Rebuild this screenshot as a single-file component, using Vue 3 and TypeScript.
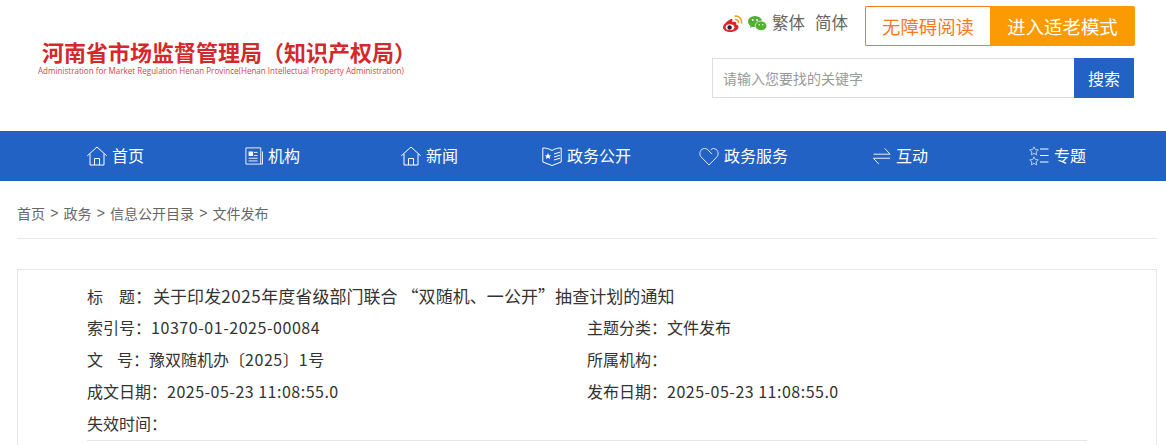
<script setup lang="ts">
const nav = [
  { t: '首页', k: 'home' },
  { t: '机构', k: 'org' },
  { t: '新闻', k: 'home' },
  { t: '政务公开', k: 'book' },
  { t: '政务服务', k: 'heart' },
  { t: '互动', k: 'swap' },
  { t: '专题', k: 'star' },
]
const crumbs = ['首页', '政务', '信息公开目录', '文件发布']
</script>

<template>
  <div class="page">
    <header class="top">
      <div class="logo">
        <div class="logo-cn">河南省市场监督管理局（知识产权局）</div>
        <div class="logo-en">Administration for Market Regulation Henan Province(Henan Intellectual Property Administration)</div>
      </div>
      <div class="tools">
        <div class="tool-row">
          <svg class="ico-weibo" width="20" height="17" viewBox="0 0 20 17">
            <path d="M9 3.800C5 5 0 9.500 0 12.500 0 15.200 3.500 17 7.500 17s8-2.300 8-5c0-1.500-1.200-2.200-2.400-2.500.6-1.700.1-3.200-2.400-2.700-.8.2-1.500.4-1.500.3.300-1.500.3-3.800-.2-3.300z" fill="#d8282c"/>
            <ellipse cx="7" cy="12.300" rx="4.300" ry="3" fill="#fff"/>
            <circle cx="6.600" cy="12.500" r="2.200" fill="#222"/>
            <path d="M11.500 1.200c4-.8 8 2.500 7 7.300M12 4.500c2-.3 3.800 1.200 3.300 3.500" fill="none" stroke="#f39a1e" stroke-width="1.500"/>
          </svg>
          <svg class="ico-wx" width="19" height="15" viewBox="0 0 19 15">
            <ellipse cx="7" cy="5.500" rx="7" ry="5.500" fill="#4fb12f"/>
            <path d="M3 9l-1 3 3.500-2z" fill="#4fb12f"/>
            <ellipse cx="13" cy="9.800" rx="5.800" ry="4.800" fill="#4fb12f" stroke="#fff" stroke-width=".7"/>
            <circle cx="4.800" cy="4" r=".9" fill="#fff"/><circle cx="9" cy="4" r=".9" fill="#fff"/>
            <circle cx="11.200" cy="8.800" r=".7" fill="#fff"/><circle cx="14.800" cy="8.800" r=".7" fill="#fff"/>
          </svg>
          <span class="lang">繁体</span>
          <span class="lang">简体</span>
          <div class="btns">
            <span class="btn-a">无障碍阅读</span>
            <span class="btn-b">进入适老模式</span>
          </div>
        </div>
        <div class="search">
          <div class="input">请输入您要找的关键字</div>
          <div class="go">搜索</div>
        </div>
      </div>
    </header>

    <nav class="nav">
      <a v-for="n in nav" :key="n.t" class="nav-item">
        <svg :class="['nav-ico', 'i-' + n.k]" viewBox="0 0 20 20" fill="none" stroke="#fff" stroke-width="1">
          <template v-if="n.k === 'home'">
            <path d="M.3 9.800 10 1l9.700 8.800M3 7.800V19h14V7.800M7.500 19v-6.500h5V19"/>
          </template>
          <template v-else-if="n.k === 'org'">
            <path d="M1 1h16.500v18H1zM19.500 5v14h-2M4 15.500h10M4 12.500h10M10 9.500h4M10 6h4"/>
            <rect x="4" y="5" width="5" height="5" fill="#fff" stroke="none"/>
          </template>
          <template v-else-if="n.k === 'book'">
            <path d="M.8 2c3.500 0 6.500.8 9.200 2.500C12.700 2.800 15.700 2 19.200 2v14L10 19.500.8 16z"/>
            <path d="M12 8l6-1.800M12 11l6-1.800M12 14l6-1.800" />
            <path d="m6 7 1 2.200 2.200.2-1.700 1.400.6 2.200-2.100-1.200-2.100 1.200.6-2.200-1.700-1.400 2.200-.2z" fill="#fff" stroke="none"/>
          </template>
          <template v-else-if="n.k === 'heart'">
            <path d="M10 19 2 10.800C-.5 7.500 1.500 2.500 5.500 2.500c2 0 3.500 1 4.500 2.500l3 3.200M11.800 3.800c.8-.8 1.800-1.300 2.700-1.300 4 0 6 5 3.500 8.300L10 19" stroke="#dfe8f7"/>
          </template>
          <template v-else-if="n.k === 'swap'">
            <path d="M.5 8h18.500M13 1.500 19 8M.5 12.500H19M.5 12.500l6 6.500"/>
          </template>
          <template v-else>
            <path d="m5 .8 1.300 2.700 3 .4-2.200 2 .6 3L5 7.400 2.300 8.900l.6-3-2.200-2 3-.4zM5 10.800l1.300 2.700 3 .4-2.200 2 .6 3L5 17.400l-2.700 1.500.6-3-2.200-2 3-.4z" stroke="#b8cdec"/>
            <path d="M11 3h8.500M11 9.500h8.500M11 16h8.500"/>
          </template>
        </svg>
        <span class="nav-t">{{ n.t }}</span>
      </a>
    </nav>

    <main class="main">
      <div class="crumbs">
        <template v-for="(c, i) in crumbs" :key="c">
          <span v-if="i" class="sep">&gt;</span>
          <span>{{ c }}</span>
        </template>
      </div>
      <section class="box">
        <div class="row title"><span class="lbl"><span>标</span><span>题</span></span>：<span class="title-text">关于印发<span class="num">2025</span>年度省级部门联合 “双随机、一公开”抽查计划的通知</span></div>
        <div class="grid">
          <div class="row">索引号：<span class="num">10370-01-2025-00084</span></div>
          <div class="row">主题分类：文件发布</div>
          <div class="row"><span class="lbl lbl-s"><span>文</span><span>号</span></span>：豫双随机办〔<span class="num">2025</span>〕<span class="num">1</span>号</div>
          <div class="row">所属机构：</div>
          <div class="row">成文日期：<span class="num date">2025-05-23 11:08:55.0</span></div>
          <div class="row">发布日期：<span class="num date">2025-05-23 11:08:55.0</span></div>
          <div class="row">失效时间：</div>
        </div>
      </section>
    </main>
  </div>
</template>

<style>
html, body { margin: 0; background: #fff; overflow: hidden; }
</style>

<style scoped>
.page { width: 1166px; height: 445px; overflow: hidden; font-family: "Noto Sans CJK SC", "Liberation Sans", sans-serif; color: #333; }
.top { height: 131px; display: flex; justify-content: space-between; box-sizing: border-box; padding: 6px 30px 0 38px; }
.logo { padding-top: 30px; width: 370px; }
.logo-cn { font-size: 22px; line-height: 30px; font-weight: 700; color: #d4282d; margin-left: 4px; white-space: nowrap; }
.logo-en { font-family: "Open Sans", sans-serif; font-size: 8.050px; line-height: 10px; color: #d4454a; white-space: nowrap; }
.tools { width: 424px; }
.tool-row { display: flex; align-items: center; height: 40px; padding-left: 10px; }
.ico-weibo { margin-right: 5px; margin-top: -5px; margin-left: 1px; }
.ico-wx { margin-right: 5px; margin-top: -5px; }
.lang { font-size: 16.500px; color: #666; margin-right: 10px; margin-top: -8px; line-height: 24px; }
.btns { display: flex; margin-left: 7px; }
.btn-a { width: 125px; height: 40px; box-sizing: border-box; border: 1px solid #f97a1d; border-right: none; border-radius: 2px 0 0 2px; color: #f97a1d; font-size: 18.400px; line-height: 38px; text-align: center; }
.btn-b { width: 145px; height: 40px; background: #fb9a02; color: #fff; font-size: 18.400px; line-height: 40px; text-align: center; border-radius: 0 2px 2px 0; }
.search { display: flex; margin-top: 12px; width: 422px; }
.input { width: 362px; height: 40px; box-sizing: border-box; border: 1px solid #ddd; border-right: none; font-size: 14px; line-height: 38px; color: #999; padding-left: 10px; }
.go { width: 60px; height: 40px; background: #2262c4; color: #fff; font-size: 16px; line-height: 40px; text-align: center; }
.nav { height: 50px; background: #2262c4; display: flex; padding-left: 37px; }
.nav-item { width: 157px; display: flex; align-items: center; justify-content: center; gap: 5px; color: #fff; font-size: 16px; }
.nav-ico { width: 20px; height: 20px; flex: none; margin-top: -1px; }
.i-org, .i-swap { width: 18px; }
.nav-t { margin-top: -2px; }
.main { padding: 0 9px 0 17px; }
.crumbs { height: 58px; box-sizing: border-box; padding-top: 20px; line-height: 24px; border-bottom: 1px solid #e8e8e8; font-size: 14px; color: #666; display: flex; gap: 5px; }
.sep { font-family: "Liberation Sans", sans-serif; width: 8.500px; text-align: center; }
.box { margin-top: 30px; border: 1px solid #e6e6e6; padding: 11px 69px 0 69px; height: 300px; font-size: 16px; color: #333; }
.row { height: 32px; line-height: 30px; white-space: nowrap; }
.title { height: 31px; font-size: 17px; }
.title-text { margin-left: 1px; letter-spacing: .06px; }
.lbl { display: inline-flex; width: 48px; justify-content: space-between; font-size: 16px; }
.lbl-s { width: 46px; }
.num { letter-spacing: .55px; }
.date { letter-spacing: .5px; }
.grid { display: grid; grid-template-columns: 500px 500px; border-bottom: 1px solid #e6e6e6; }
</style>
